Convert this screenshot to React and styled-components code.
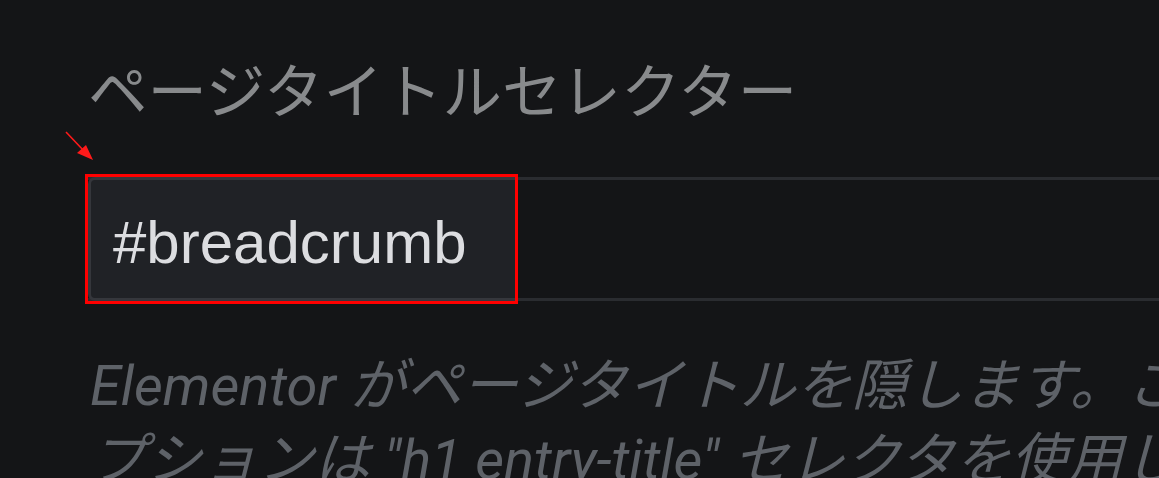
import React from 'react';
import styled, { createGlobalStyle } from 'styled-components';

const GlobalStyle = createGlobalStyle`
  html, body {
    margin: 0;
    padding: 0;
    background: #141517;
    overflow: hidden;
  }
`;

const Page = styled.div`
  width: 1330px;
  height: 478px;
  padding: 57px 0 0 88px;
  box-sizing: border-box;
  overflow: hidden;
`;

const Title = styled.h2`
  margin: 0;
  font-family: "Noto Sans CJK JP", "Noto Sans", sans-serif;
  font-weight: 400;
  font-size: 59.5px;
  line-height: 60px;
  color: #888a8c;
  white-space: nowrap;
`;

const InputRow = styled.div`
  position: relative;
  margin-top: 60px;
  display: flex;
  height: 124px;
  box-sizing: border-box;
  border-top: 3px solid #2a2c30;
  border-bottom: 3px solid #2a2c30;
`;

const Field = styled.div`
  position: relative;
  width: 427px;
  margin: -3px 0;
  box-sizing: border-box;
  padding: 28px 0 0 22px;
  background: #202226;
  border: 3px solid #35373c;
  border-right: none;
  border-radius: 7px 0 0 7px;
  font-family: "Liberation Sans", Arial, sans-serif;
  font-size: 60px;
  line-height: 69px;
  color: #dcdde0;

  &::after {
    content: '';
    position: absolute;
    inset: -6px -3px -6px -6px;
    border: 3px solid #ff0000;
  }
`;

const Arrow = styled.svg`
  position: absolute;
  left: -24px;
  top: -49px;
  width: 32px;
  height: 34px;
  overflow: visible;
`;

const Description = styled.p`
  margin: 48px 0 0 2px;
  font-family: Roboto, "Noto Sans CJK JP", sans-serif;
  font-style: italic;
  font-size: 56px;
  line-height: 74px;
  color: #5e6268;
`;

function App() {
  return (
    <>
      <GlobalStyle />
      <Page>
        <Title>ページタイトルセレクター</Title>
        <InputRow>
          <Arrow viewBox="0 0 32 34">
            <line x1="2" y1="1" x2="20" y2="20" stroke="#ff1a1a" strokeWidth="1.6" />
            <polygon points="29,29 13,22 22,14" fill="#ff1a1a" />
          </Arrow>
          <Field>#breadcrumb</Field>
        </InputRow>
        <Description>
          Elementor がページタイトルを隠します。このオプションは "h1 entry-title" セレクタを使用します。お使いのテーマのセレクタが異なる場合は、上に入力してください。
        </Description>
      </Page>
    </>
  );
}

export default App;
